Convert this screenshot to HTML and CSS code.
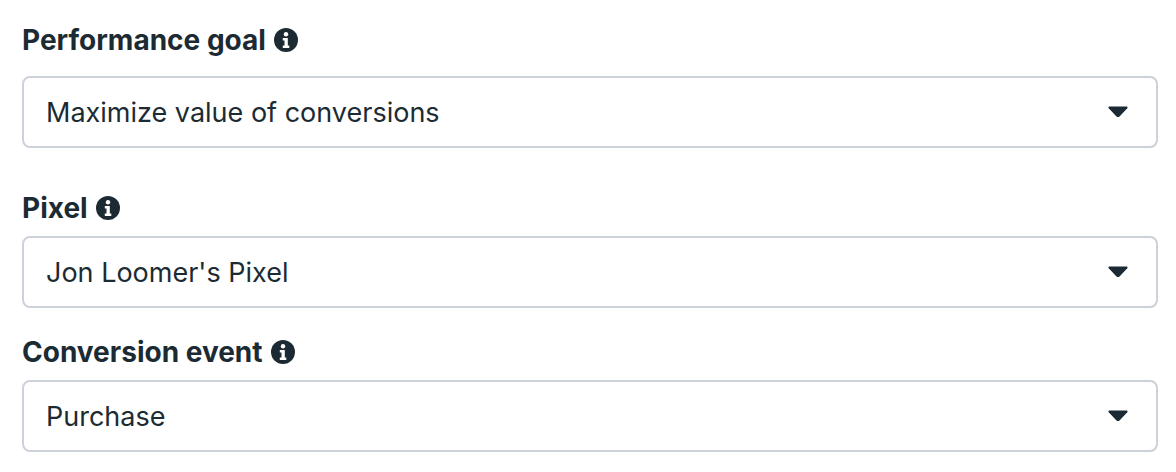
FILE: index.html
```html
<!DOCTYPE html>
<html lang="en">
<head>
<meta charset="utf-8">
<title>Conversion settings</title>
<link rel="stylesheet" href="styles.css">
</head>
<body>
<form class="form">
  <section class="field field-first">
    <div class="label"><span>Performance goal</span>
      <svg class="info" viewBox="0 0 24 24"><circle cx="12" cy="12" r="12" fill="#1c2b33"/><circle cx="12" cy="6.2" r="2.2" fill="#fff"/><path d="M8.8 10h5v7.4h1.500V20H8.800v-2.600h1.700v-4.800H8.800z" fill="#fff"/></svg>
    </div>
    <div class="select"><span>Maximize value of conversions</span>
      <svg class="caret" viewBox="0 0 20 12"><path d="M1.5 .5h17c1 0 1.400 1 .8 1.700l-7.800 8.200c-.9.900-2.100.900-3 0L.7 2.200C.1 1.500.5.500 1.500.500z" fill="#1c2b33"/></svg>
    </div>
  </section>
  <section class="field field-second">
    <div class="label"><span>Pixel</span>
      <svg class="info" viewBox="0 0 24 24"><circle cx="12" cy="12" r="12" fill="#1c2b33"/><circle cx="12" cy="6.2" r="2.2" fill="#fff"/><path d="M8.8 10h5v7.4h1.500V20H8.800v-2.600h1.700v-4.800H8.800z" fill="#fff"/></svg>
    </div>
    <div class="select"><span>Jon Loomer's Pixel</span>
      <svg class="caret" viewBox="0 0 20 12"><path d="M1.5 .5h17c1 0 1.400 1 .8 1.700l-7.800 8.200c-.9.900-2.100.900-3 0L.7 2.200C.1 1.500.5.500 1.500.500z" fill="#1c2b33"/></svg>
    </div>
  </section>
  <section class="field field-third">
    <div class="label"><span>Conversion event</span>
      <svg class="info" viewBox="0 0 24 24"><circle cx="12" cy="12" r="12" fill="#1c2b33"/><circle cx="12" cy="6.2" r="2.2" fill="#fff"/><path d="M8.8 10h5v7.4h1.500V20H8.800v-2.600h1.700v-4.800H8.800z" fill="#fff"/></svg>
    </div>
    <div class="select"><span>Purchase</span>
      <svg class="caret" viewBox="0 0 20 12"><path d="M1.5 .5h17c1 0 1.400 1 .8 1.700l-7.800 8.200c-.9.900-2.100.900-3 0L.7 2.200C.1 1.500.5.500 1.500.500z" fill="#1c2b33"/></svg>
    </div>
  </section>
</form>
</body>
</html>
```
FILE: styles.css
```css
html, body {
  margin: 0;
  padding: 0;
  background: #fff;
}
body {
  width: 1176px;
  height: 472px;
  overflow: hidden;
  font-family: Inter, "Liberation Sans", sans-serif;
  color: #1c2b33;
}
.form {
  display: flex;
  flex-direction: column;
  padding: 24px 18px 0 22px;
}
.field {
  display: flex;
  flex-direction: column;
}
.field-second { margin-top: 44px; }
.field-third { margin-top: 28px; }
.label {
  display: flex;
  align-items: center;
  gap: 8px;
  height: 32px;
  font-size: 28px;
  font-weight: 700;
}
.field-first .label { margin-bottom: 20px; }
.field-second .label,
.field-third .label { margin-bottom: 12px; }
.info {
  width: 24px;
  height: 24px;
  flex: none;
}
.select {
  box-sizing: border-box;
  height: 72px;
  display: flex;
  align-items: center;
  justify-content: space-between;
  padding: 0 28px 0 22px;
  border: 2px solid #cbd2d9;
  border-radius: 8px;
  font-size: 27px;
  font-weight: 400;
}
.caret {
  width: 20px;
  height: 12px;
  flex: none;
}
```
